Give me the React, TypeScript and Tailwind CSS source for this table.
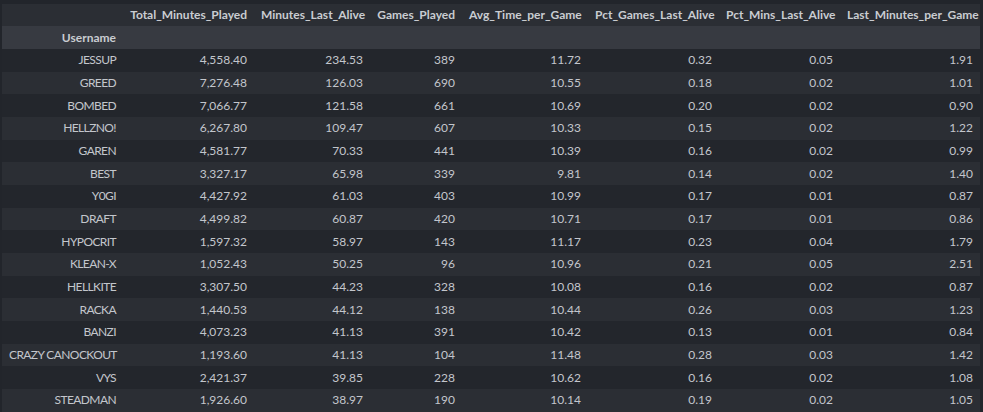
import React from "react";

const cols = [
  { key: "Username", w: 121 },
  { key: "Total_Minutes_Played", w: 131 },
  { key: "Minutes_Last_Alive", w: 116 },
  { key: "Games_Played", w: 92 },
  { key: "Avg_Time_per_Game", w: 126 },
  { key: "Pct_Games_Last_Alive", w: 131 },
  { key: "Pct_Mins_Last_Alive", w: 121 },
  { key: "Last_Minutes_per_Game", w: 140 },
];

const rows: string[][] = [
  ["JESSUP", "4,558.40", "234.53", "389", "11.72", "0.32", "0.05", "1.91"],
  ["GREED", "7,276.48", "126.03", "690", "10.55", "0.18", "0.02", "1.01"],
  ["BOMBED", "7,066.77", "121.58", "661", "10.69", "0.20", "0.02", "0.90"],
  ["HELLZNO!", "6,267.80", "109.47", "607", "10.33", "0.15", "0.02", "1.22"],
  ["GAREN", "4,581.77", "70.33", "441", "10.39", "0.16", "0.02", "0.99"],
  ["BEST", "3,327.17", "65.98", "339", "9.81", "0.14", "0.02", "1.40"],
  ["Y0GI", "4,427.92", "61.03", "403", "10.99", "0.17", "0.01", "0.87"],
  ["DRAFT", "4,499.82", "60.87", "420", "10.71", "0.17", "0.01", "0.86"],
  ["HYPOCRIT", "1,597.32", "58.97", "143", "11.17", "0.23", "0.04", "1.79"],
  ["KLEAN-X", "1,052.43", "50.25", "96", "10.96", "0.21", "0.05", "2.51"],
  ["HELLKITE", "3,307.50", "44.23", "328", "10.08", "0.16", "0.02", "0.87"],
  ["RACKA", "1,440.53", "44.12", "138", "10.44", "0.26", "0.03", "1.23"],
  ["BANZI", "4,073.23", "41.13", "391", "10.42", "0.13", "0.01", "0.84"],
  ["CRAZY CANOCKOUT", "1,193.60", "41.13", "104", "11.48", "0.28", "0.03", "1.42"],
  ["VYS", "2,421.37", "39.85", "228", "10.62", "0.16", "0.02", "1.08"],
  ["STEADMAN", "1,926.60", "38.97", "190", "10.14", "0.19", "0.02", "1.05"],
];

export default function App() {
  return (
    <div
      className="w-[983px] h-[412px] overflow-hidden bg-[#22252b] pt-[4px] pl-[2px] text-[12px] text-[#c3c6cc]"
      style={{ fontFamily: 'Lato, "Noto Sans", sans-serif' }}
    >
      <div className="w-[978px]">
        <div className="flex h-[22px] items-center bg-[#2b2e34] font-bold text-[#c9ccd1]">
          {cols.map((c, i) => (
            <div
              key={c.key}
              className="px-[7px] text-right whitespace-nowrap shrink-0"
              style={{ width: c.w }}
            >
              {i === 0 ? "" : c.key}
            </div>
          ))}
        </div>
        <div className="flex h-[23px] items-center bg-[#373a41] font-bold text-[#c9ccd1]">
          <div className="px-[7px] text-right whitespace-nowrap shrink-0 w-[121px]">Username</div>
        </div>
        {rows.map((r, ri) => (
          <div
            key={ri}
            className={`flex h-[22.667px] items-center ${ri % 2 === 0 ? "bg-[#23262c]" : "bg-[#2b2e34]"}`}
          >
            {r.map((v, ci) => (
              <div
                key={ci}
                className={`px-[7px] text-right whitespace-nowrap shrink-0 ${ci === 0 ? "tracking-[-0.6px]" : ""}`}
                style={{ width: cols[ci].w }}
              >
                {v}
              </div>
            ))}
          </div>
        ))}
      </div>
    </div>
  );
}
